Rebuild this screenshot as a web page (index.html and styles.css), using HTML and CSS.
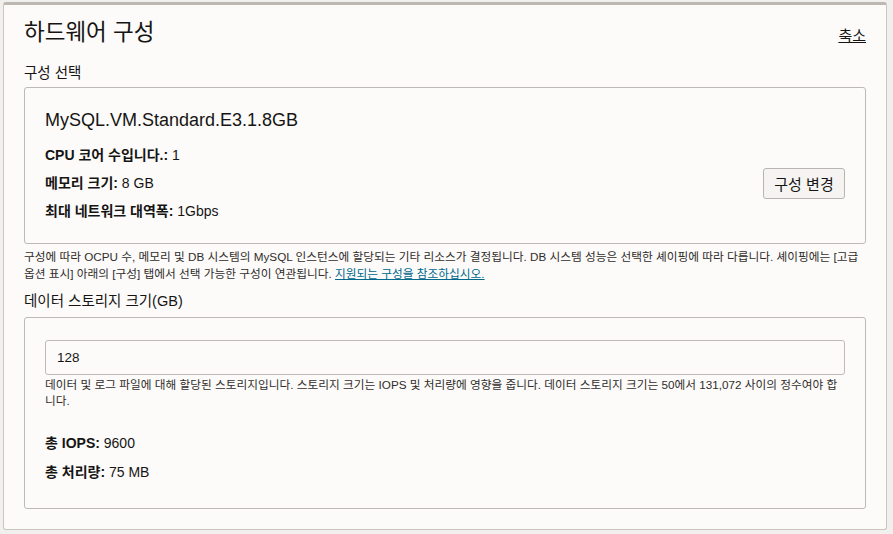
FILE: index.html
```html
<!DOCTYPE html>
<html lang="ko">
<head>
    <meta charset="UTF-8">
    <meta name="viewport" content="width=device-width, initial-scale=1.0">
    <title>하드웨어 구성</title>
    <link rel="stylesheet" href="styles.css">
</head>
<body>

<div class="panel">
    <div class="panel-header">
        <h2 class="panel-title">하드웨어 구성</h2>
        <a href="#" class="collapse-link">축소</a>
    </div>

    <div class="field-label first">구성 선택</div>
    <div class="box shape-box">
        <div class="shape-name">MySQL.VM.Standard.E3.1.8GB</div>
        <div class="shape-row">
            <div class="spec-list">
                <div class="spec"><b>CPU 코어 수입니다.:</b> 1</div>
                <div class="spec"><b>메모리 크기:</b> 8 GB</div>
                <div class="spec"><b>최대 네트워크 대역폭:</b> 1Gbps</div>
            </div>
            <button class="btn">구성 변경</button>
        </div>
    </div>
    <p class="help">구성에 따라 OCPU 수, 메모리 및 DB 시스템의 MySQL 인스턴스에 할당되는 기타 리소스가 결정됩니다. DB 시스템 성능은 선택한 셰이핑에 따라 다릅니다. 셰이핑에는 [고급 옵션 표시] 아래의 [구성] 탭에서 선택 가능한 구성이 연관됩니다. <a href="#" class="help-link">지원되는 구성을 참조하십시오.</a></p>

    <div class="field-label">데이터 스토리지 크기(GB)</div>
    <div class="box storage-box">
        <input type="text" class="text-input" value="128">
        <p class="help inner">데이터 및 로그 파일에 대해 할당된 스토리지입니다. 스토리지 크기는 IOPS 및 처리량에 영향을 줍니다. 데이터 스토리지 크기는 50에서 131,072 사이의 정수여야 합니다.</p>
        <div class="spec-list totals">
            <div class="spec"><b>총 IOPS:</b> 9600</div>
            <div class="spec"><b>총 처리량:</b> 75 MB</div>
        </div>
    </div>
</div>

</body>
</html>
```

FILE: styles.css
```css
body {
    margin: 0;
    background-color: #f1f0ef;
    font-family: "Liberation Sans", "Noto Sans CJK KR", sans-serif;
    color: #161513;
}

.panel {
    margin: 2px 6px 4px 3px;
    padding: 0 20px 20px 20px;
    background-color: #fcfbfa;
    border: 1px solid #c9c5c1;
    border-top: 3px solid #bcb7b1;
    border-radius: 3px;
}

.panel-header {
    display: flex;
    justify-content: space-between;
    align-items: center;
    margin-top: 13px;
    height: 30px;
}

.panel-title {
    margin: 0;
    font-size: 22.5px;
    font-weight: normal;
    line-height: 30px;
}

.collapse-link {
    color: #161513;
    font-size: 15px;
    margin-top: 2px;
}

.field-label {
    font-size: 14.5px;
    line-height: 20px;
    margin: 9px 0 6px;
}

.field-label.first {
    margin: 15px 0 4px;
}

.box {
    background-color: #fcfbfa;
    border: 1px solid #bdb9b4;
    border-radius: 3px;
    padding: 20px;
}

.shape-box {
    padding-bottom: 18px;
}

.shape-name {
    font-size: 18px;
    line-height: 24px;
}

.shape-row {
    display: flex;
    justify-content: space-between;
    align-items: center;
    margin-top: 9px;
}

.spec {
    font-size: 14px;
    line-height: 28px;
}

.btn {
    width: 82px;
    height: 31px;
    padding: 0;
    background-color: #f5f4f2;
    border: 1px solid #b8b4b0;
    border-radius: 3px;
    font-family: inherit;
    font-size: 15px;
    color: #161513;
    cursor: pointer;
}

.help {
    margin: 4px 0 0;
    font-size: 11.7px;
    line-height: 17px;
    color: #302d2a;
}

.help-link {
    color: #00688c;
}

.storage-box {
    padding: 22px 20px 21px;
}

.text-input {
    display: block;
    box-sizing: border-box;
    width: 100%;
    height: 35px;
    padding: 0 11px;
    background-color: #fcfbfa;
    border: 1px solid #bfbab5;
    border-radius: 3px;
    font-family: inherit;
    font-size: 13.5px;
    color: #161513;
}

.help.inner {
    margin-top: 2px;
    line-height: 16px;
}

.totals {
    margin-top: 20px;
}

.totals .spec {
    line-height: 29px;
}
```
